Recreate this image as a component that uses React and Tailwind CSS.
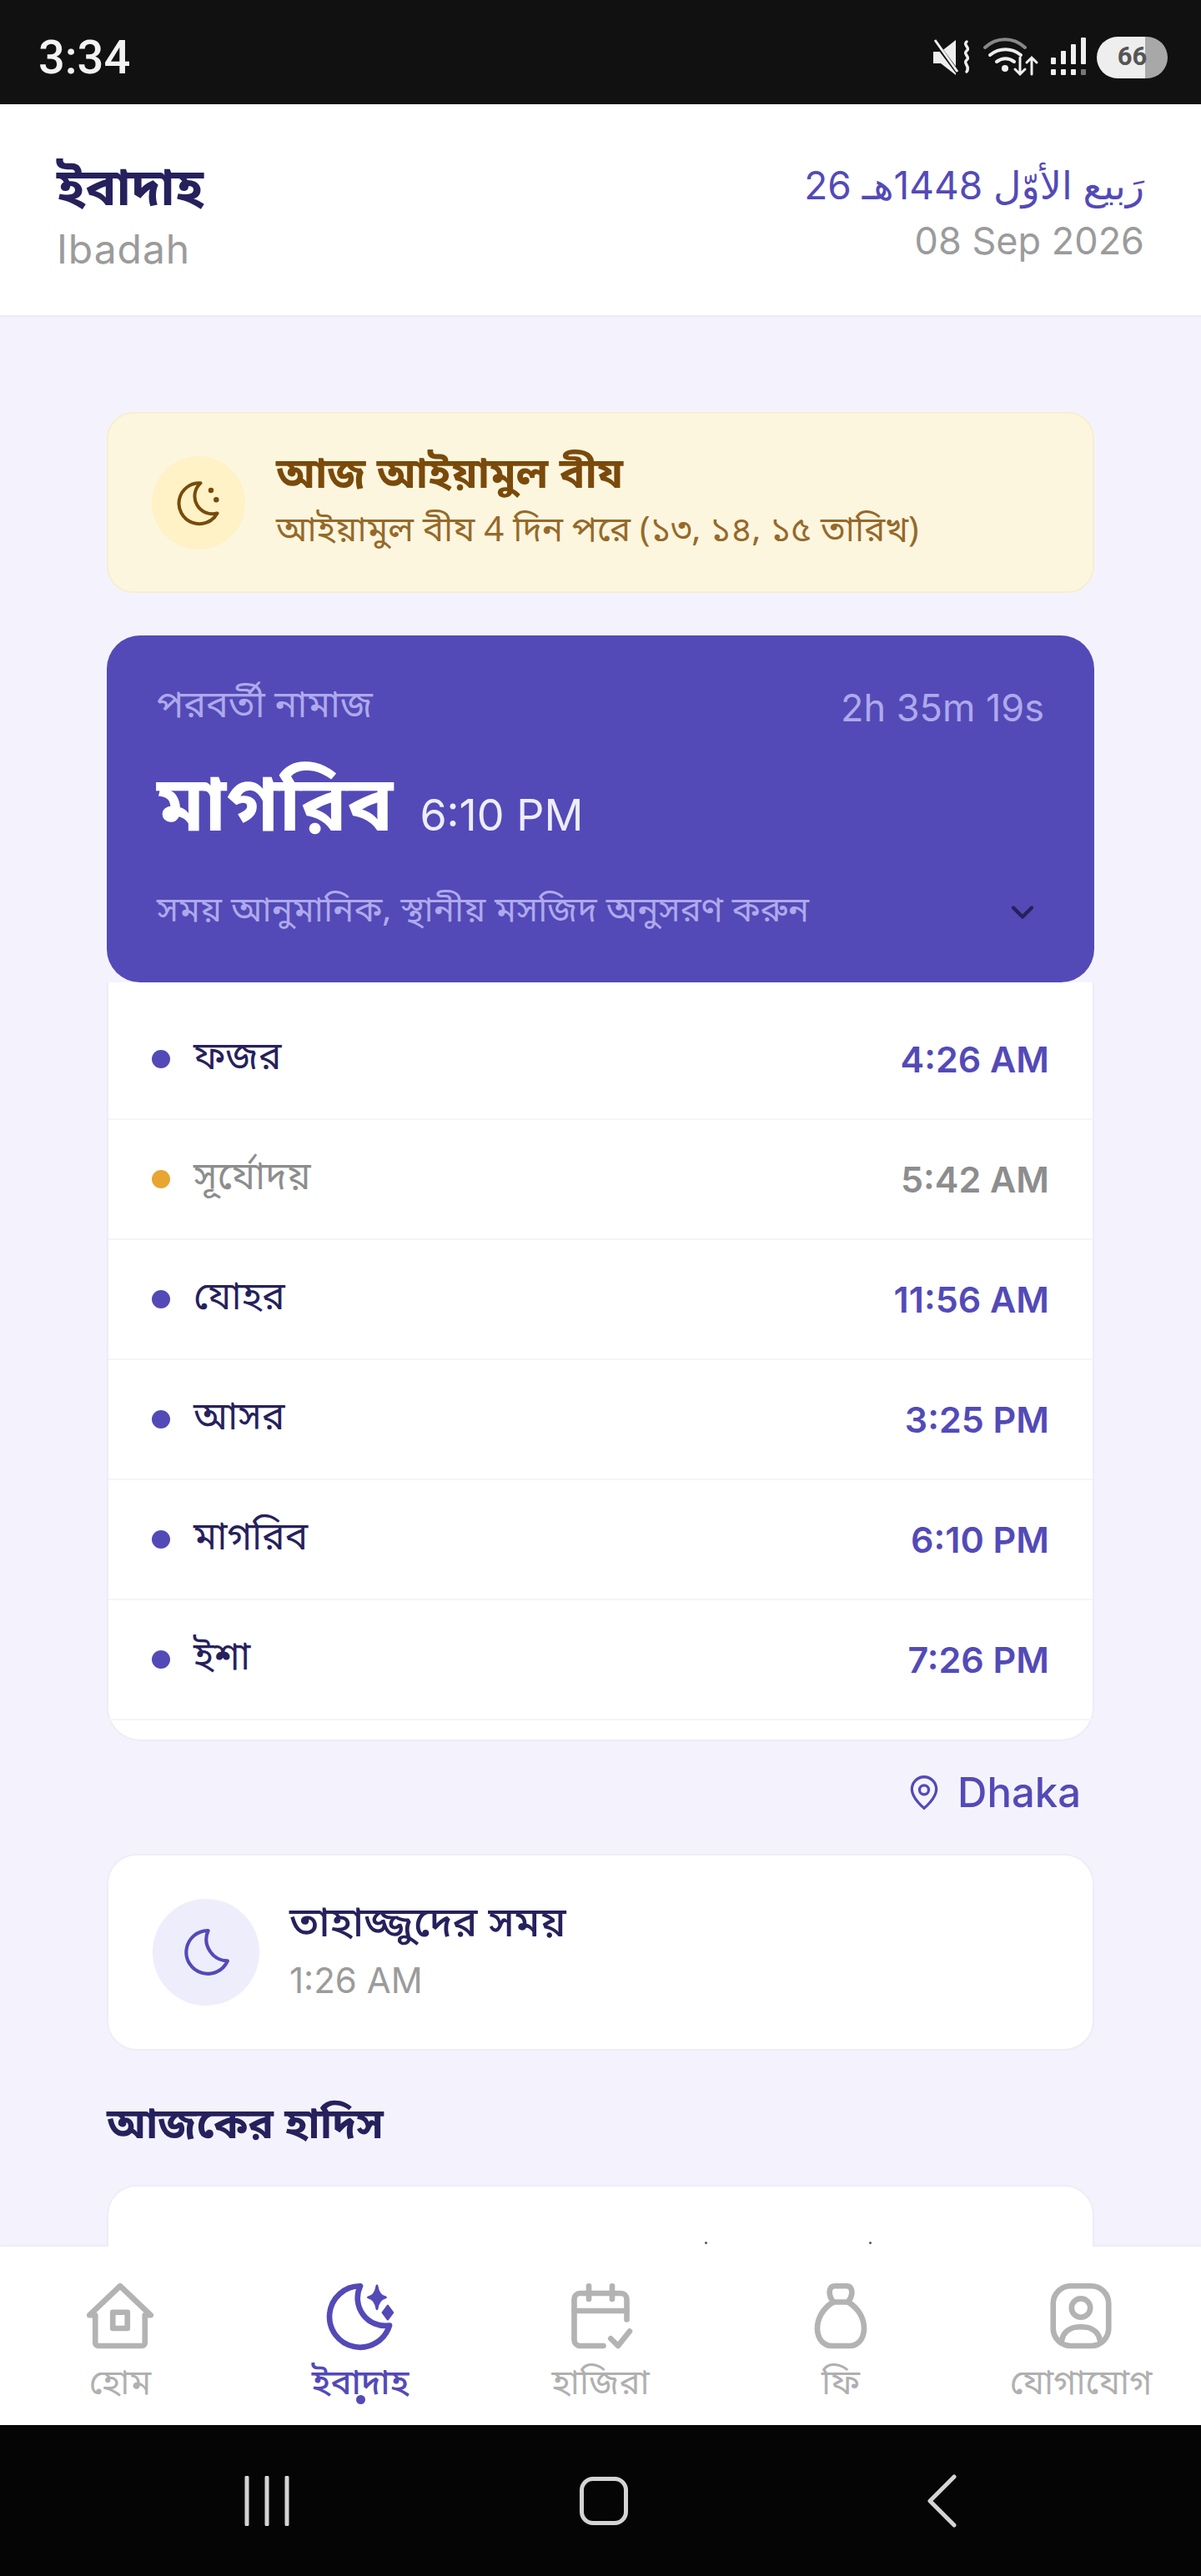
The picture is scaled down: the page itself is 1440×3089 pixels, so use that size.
const bn = { fontFamily: '"Noto Sans Bengali", "Noto Sans", "Lohit Bengali", "FreeSans", sans-serif' }

const prayers = [
  { name: 'ফজর', time: '4:26 AM' },
  { name: 'সূর্যোদয়', time: '5:42 AM', muted: true },
  { name: 'যোহর', time: '11:56 AM' },
  { name: 'আসর', time: '3:25 PM' },
  { name: 'মাগরিব', time: '6:10 PM' },
  { name: 'ইশা', time: '7:26 PM' },
]

function StatusIcons() {
  return (
    <div className="flex items-center gap-3">
      <svg width="50" height="46" viewBox="0 0 50 46" fill="none">
        <path d="M2 16h9L29 2v42L11 30H2z" fill="#eee" />
        <path d="M3 3l30 40" stroke="#111" strokeWidth="5" />
        <path d="M4 2l27 38" stroke="#eee" strokeWidth="3" />
        <path d="M42 4c-5 4 5 7 0 11s5 7 0 11 5 7 0 14" stroke="#eee" strokeWidth="3.5" strokeLinecap="round" />
      </svg>
      <svg width="68" height="48" viewBox="0 0 68 48" fill="none" strokeLinecap="round">
        <path d="M2 12C16-1 36-1 50 12" stroke="#888" strokeWidth="4" />
        <path d="M8 21c11-9 26-9 37 0" stroke="#eee" strokeWidth="4" />
        <path d="M16 29c7-5 14-5 21 0" stroke="#eee" strokeWidth="4" />
        <circle cx="26" cy="37" r="4" fill="#eee" />
        <path d="M44 24v20M38 38l6 6 6-6M58 44V24M52 30l6-6 6 6" stroke="#eee" strokeWidth="3" />
      </svg>
      <svg width="44" height="48" viewBox="0 0 44 48" fill="#eee">
        <rect x="1" y="24" width="6" height="8" rx="1" />
        <rect x="13" y="16" width="6" height="16" rx="1" />
        <rect x="25" y="8" width="6" height="24" rx="1" />
        <rect x="37" y="0" width="6" height="32" rx="1" />
        <rect x="1" y="38" width="6" height="7" rx="1" />
        <rect x="13" y="38" width="6" height="7" rx="1" />
        <rect x="25" y="38" width="6" height="7" rx="1" />
        <rect x="37" y="38" width="6" height="7" rx="1" fill="#777" />
      </svg>
      <div className="flex h-[50px] w-[85px] items-center justify-center rounded-full bg-[linear-gradient(90deg,#eeeeee_68%,#a8a8a8_68%)] text-[31px] font-bold text-[#555] [font-family:Roboto,sans-serif]">
        66
      </div>
    </div>
  )
}

function NavItem({ label, active, children }) {
  return (
    <div className="relative flex flex-col items-center pt-[42px]">
      {children}
      <span
        style={bn}
        className={`mt-[18px] text-[42px] leading-[44px] ${active ? 'font-medium text-[#534ab7]' : 'text-[#b0b0b0]'}`}
      >
        {label}
      </span>
      {active && <span className="absolute top-[178px] h-[11px] w-[11px] rounded-full bg-[#534ab7]" />}
    </div>
  )
}

const navIcon = {
  width: 84,
  height: 84,
  viewBox: '0 0 24 24',
  fill: 'none',
  stroke: '#b3b3b3',
  strokeWidth: 1.9,
  strokeLinecap: 'round',
  strokeLinejoin: 'round',
}

export default function App() {
  return (
    <div className="flex h-[3089px] flex-col overflow-hidden bg-[#f4f3fd] [font-family:Inter,sans-serif]">
      <div className="flex h-[125px] shrink-0 items-center justify-between bg-[#111111] pl-[46px] pr-[40px] pt-[12px]">
        <span className="text-[56px] font-medium text-[#f2f2f2] [font-family:Roboto,sans-serif]">3:34</span>
        <StatusIcons />
      </div>

      <header className="flex h-[255px] shrink-0 items-start justify-between border-b-2 border-[#ecebf3] bg-white px-[68px] pt-[55px]">
        <div className="pt-[13px]">
          <h1 style={bn} className="text-[62px] font-bold leading-[74px] text-[#26215c]">ইবাদাহ</h1>
          <p className="mt-[4px] text-[48px] leading-[56px] tracking-[0.02em] text-[#9b9b9b]">Ibadah</p>
        </div>
        <div className="pt-[7px] text-right">
          <p dir="rtl" className="text-[46px] leading-[70px] text-[#534ab7] [font-family:Inter,'DejaVu_Sans',sans-serif]">
            رَبيع الأوّل 1448هـ 26
          </p>
          <p className="mt-[4px] text-[45px] leading-[56px] text-[#9b9b9b]">08 Sep 2026</p>
        </div>
      </header>

      <main className="min-h-0 flex-1 overflow-hidden px-[128px] pt-[114px]">
        <section className="flex h-[217px] items-center gap-[37px] rounded-[32px] border-2 border-[#f6eecf] bg-[#fdf6df] pl-[52px]">
          <div className="flex h-[112px] w-[112px] shrink-0 items-center justify-center rounded-full bg-[#fef2c6]">
            <svg width="60" height="60" viewBox="0 0 24 24" fill="none" stroke="#7a4a0a" strokeWidth="1.6" strokeLinecap="round" strokeLinejoin="round">
              <path d="M13 2.500a9.800 9.800 0 1 0 8 14.500A8.500 8.500 0 0 1 13 2.500z" />
              <path d="M18 6h.01M20.500 10.500h.01" strokeWidth="2.6" />
            </svg>
          </div>
          <div style={bn}>
            <h2 className="text-[51px] font-bold leading-[60px] text-[#7a4a0a]">আজ আইয়ামুল বীয</h2>
            <p className="mt-[10px] text-[42px] leading-[52px] text-[#96692a]">আইয়ামুল বীয 4 দিন পরে (১৩, ১৪, ১৫ তারিখ)</p>
          </div>
        </section>

        <section className="relative z-10 mt-[51px] h-[416px] rounded-[40px] bg-[#534ab7] px-[60px] pt-[60px]">
          <div className="flex items-center justify-between text-[#afa9ec]">
            <span style={bn} className="text-[45px] leading-[54px]">পরবর্তী নামাজ</span>
            <span className="text-[45px] leading-[54px]">2h 35m 19s</span>
          </div>
          <div className="mt-[42px] flex items-baseline gap-[32px]">
            <span style={bn} className="text-[92px] font-bold leading-[110px] text-white">মাগরিব</span>
            <span className="text-[52px] leading-[110px] text-[#eeedfe]">6:10 PM</span>
          </div>
          <div className="mt-[36px] flex items-center justify-between pr-[4px]">
            <span style={bn} className="text-[42px] leading-[50px] text-[#afa9ec]">সময় আনুমানিক, স্থানীয় মসজিদ অনুসরণ করুন</span>
            <svg width="44" height="44" viewBox="0 0 24 24" fill="none" stroke="#26215c" strokeWidth="2.4" strokeLinecap="round" strokeLinejoin="round">
              <path d="M6 9l6 6 6-6" />
            </svg>
          </div>
        </section>

        <section className="h-[910px] rounded-b-[40px] border-2 border-t-0 border-[#eeedf6] bg-white pt-[21px]">
          {prayers.map((p) => (
            <div key={p.name} className="flex h-[144px] items-center border-b-2 border-[#f5f5f9] pl-[52px] pr-[52px]">
              <span className={`h-[22px] w-[22px] rounded-full ${p.muted ? 'bg-[#e8a530]' : 'bg-[#534ab7]'}`} />
              <span style={bn} className={`ml-[28px] text-[46px] ${p.muted ? 'text-[#8d8d8d]' : 'text-[#26215c]'}`}>{p.name}</span>
              <span className={`ml-auto text-[43px] font-semibold ${p.muted ? 'text-[#8d8d8d]' : 'text-[#534ab7]'}`}>{p.time}</span>
            </div>
          ))}
        </section>

        <div className="mt-[34px] flex items-center justify-end gap-[18px] pr-[16px] text-[#534ab7]">
          <svg width="44" height="44" viewBox="0 0 24 24" fill="none" stroke="#534ab7" strokeWidth="1.8">
            <path d="M12 22s8-6.500 8-12.500a8 8 0 1 0-16 0C4 15.500 12 22 12 22z" />
            <circle cx="12" cy="10" r="3" />
          </svg>
          <span className="text-[49px] font-medium leading-[56px]">Dhaka</span>
        </div>

        <section className="mt-[45px] flex h-[236px] items-center gap-[36px] rounded-[36px] border-2 border-[#eeedf6] bg-white pl-[53px]">
          <div className="flex h-[128px] w-[128px] shrink-0 items-center justify-center rounded-full bg-[#eeedfb]">
            <svg width="62" height="62" viewBox="0 0 24 24" fill="none" stroke="#534ab7" strokeWidth="1.6" strokeLinecap="round" strokeLinejoin="round">
              <path d="M13 2a10 10 0 1 0 9 14A10 10 0 0 1 13 2z" />
            </svg>
          </div>
          <div>
            <p style={bn} className="text-[50px] font-medium leading-[58px] text-[#26215c]">তাহাজ্জুদের সময়</p>
            <p className="mt-[10px] text-[42px] leading-[54px] text-[#9b9b9b]">1:26 AM</p>
          </div>
        </section>

        <h2 style={bn} className="mt-[62px] text-[51px] font-bold leading-[60px] text-[#26215c]">আজকের হাদিস</h2>

        <section className="relative mt-[39px] h-[200px] rounded-t-[36px] border-2 border-[#eeedf6] bg-white">
          <span className="absolute left-[715px] top-[66px] h-[3px] w-[3px] rounded-full bg-[#555]" />
          <span className="absolute left-[912px] top-[66px] h-[3px] w-[3px] rounded-full bg-[#555]" />
        </section>
      </main>

      <nav className="grid h-[214px] shrink-0 grid-cols-5 bg-white shadow-[0_-2px_3px_rgba(38,33,92,0.04)]">
        <NavItem label="হোম">
          <svg {...navIcon}>
            <path d="M1.500 11.500L12 1.500l10.500 10h-2v9.500a1 1 0 0 1-1 1H4.500a1 1 0 0 1-1-1v-9.500z" />
            <rect x="9.500" y="10.500" width="5" height="5.500" />
          </svg>
        </NavItem>
        <NavItem label="ইবাদাহ" active>
          <svg {...navIcon} stroke="#534ab7">
            <path d="M12 1.500a10.500 10.500 0 1 0 10 13.500A9.500 9.500 0 0 1 12 1.500z" />
            <path d="M17.700 1.400Q18.200 4.900 20.700 5.400 18.200 5.900 17.700 9.400 17.200 5.900 14.700 5.400 17.200 4.900 17.700 1.400z" fill="#534ab7" strokeWidth="0.8" />
            <path d="M21.400 8.200L23.200 10.600 21.400 13 19.600 10.600z" fill="#534ab7" strokeWidth="0.6" />
          </svg>
        </NavItem>
        <NavItem label="হাজিরা">
          <svg {...navIcon}>
            <path d="M21 13V6a2 2 0 0 0-2-2H5a2 2 0 0 0-2 2v14a2 2 0 0 0 2 2h8" />
            <path d="M8 1.500v4.500M16 1.500v4.500M3 10h18" />
            <path d="M15.500 19.500l2.500 2.500 4-5" />
          </svg>
        </NavItem>
        <NavItem label="ফি">
          <svg {...navIcon}>
            <path d="M9.500 7h5c1-1.300 1.500-3 1.200-4.200C15.500 2 15 1.500 14 1.500h-4c-1 0-1.500.5-1.700 1.300C8 4 8.500 5.700 9.500 7z" />
            <path d="M9.500 7C6 9 4 12.500 4 16c0 3.500 2 6 5 6h6c3 0 5-2.500 5-6 0-3.500-2-7-5.500-9" />
          </svg>
        </NavItem>
        <NavItem label="যোগাযোগ">
          <svg {...navIcon}>
            <rect x="2.500" y="1.500" width="19" height="20.500" rx="6" />
            <circle cx="12" cy="9" r="3.200" />
            <path d="M5.500 20c.5-3 3-4.500 6.500-4.500s6 1.500 6.500 4.500" />
          </svg>
        </NavItem>
      </nav>

      <div className="flex h-[181px] shrink-0 items-center bg-[#050505] pl-[290px]">
        <svg width="60" height="60" viewBox="0 0 60 60" stroke="#d4d4d4" strokeWidth="5" strokeLinecap="round">
          <path d="M6 2v56M30 2v56M54 2v56" />
        </svg>
        <div className="ml-[345px] h-[58px] w-[58px] rounded-[16px] border-[5px] border-[#d4d4d4]" />
        <svg className="ml-[357px]" width="40" height="64" viewBox="0 0 40 64" fill="none" stroke="#d4d4d4" strokeWidth="5" strokeLinecap="round" strokeLinejoin="round">
          <path d="M34 3L5 32l29 29" />
        </svg>
      </div>
    </div>
  )
}
